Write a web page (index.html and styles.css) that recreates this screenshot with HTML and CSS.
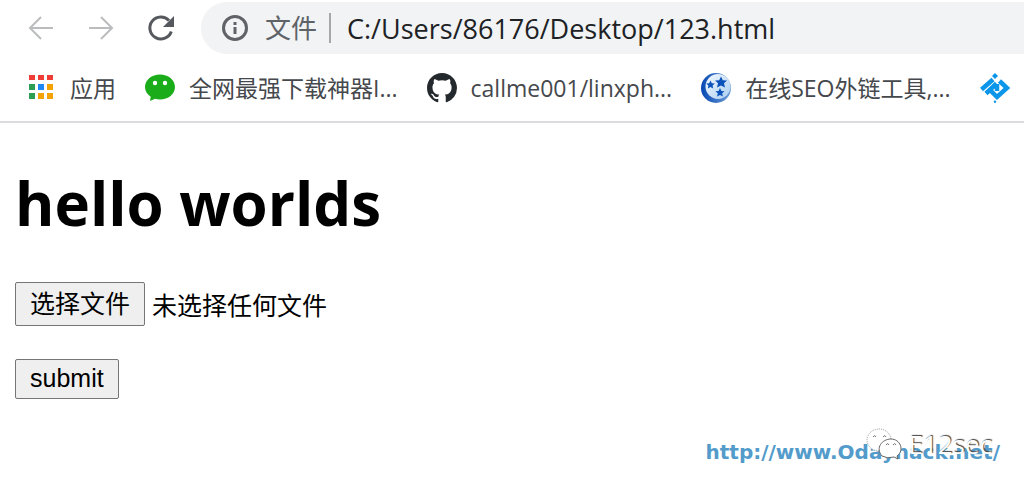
FILE: index.html
```html
<!DOCTYPE html>
<html lang="zh-CN">
<head>
<meta charset="utf-8">
<title>123.html</title>
<link rel="stylesheet" href="styles.css">
</head>
<body>
<header class="browser">
  <div class="toolbar">
    <nav class="controls">
      <button class="tool faded" type="button" aria-label="后退"><svg viewBox="0 0 28 28"><path d="M26 14H3M14 3L3 14l11 11"/></svg></button>
      <button class="tool faded" type="button" aria-label="前进"><svg viewBox="0 0 28 28"><path d="M2 14h23M14 3l11 11-11 11"/></svg></button>
      <button class="tool" type="button" aria-label="重新加载"><svg viewBox="0 0 28 28"><path d="M24.300 17.500A11 11 0 1 1 22 6.500"/><path class="solid" d="M27 2v11H16z"/></svg></button>
    </nav>
    <div class="address">
      <svg class="info" viewBox="0 0 28 28" aria-hidden="true"><circle cx="14" cy="14" r="11.500"/><path d="M14 13v7M14 8v3"/></svg>
      <label class="scheme" for="url">文件</label>
      <input class="url" id="url" type="text" value="C:/Users/86176/Desktop/123.html">
    </div>
  </div>
  <nav class="bookmarks">
    <a class="bookmark" href="#"><svg viewBox="0 0 30 30" aria-hidden="true"><path fill="#f03c37" d="M3 2h6v5H3zM12 2h6v5h-6zM21 2h6v5h-6z"/><path fill="#2e9e55" d="M3 11h6v6H3zM3 20h6v6H3z"/><path fill="#1e88f5" d="M12 11h6v6h-6z"/><path fill="#f2a305" d="M21 11h6v6h-6zM12 20h6v6h-6zM21 20h6v6h-6z"/></svg><span>应用</span></a>
    <a class="bookmark" href="#"><svg viewBox="0 0 30 30" aria-hidden="true"><path fill="#1aad19" d="M15 1.500C6.800 1.500 0 6.900 0 14c0 4 2.200 7.500 5.700 9.800L5 28l5-2.200c1.600.5 3.300.7 5 .7 8.200 0 15-5.400 15-12.500S23.200 1.500 15 1.500z"/><circle cx="10" cy="10" r="2.200" fill="#fff"/><circle cx="20" cy="10" r="2.200" fill="#fff"/></svg><span>全网最强下载神器I...</span></a>
    <a class="bookmark" href="#"><svg viewBox="0 0 16 16" aria-hidden="true"><path fill="#24292e" fill-rule="evenodd" d="M8 0C3.580 0 0 3.580 0 8c0 3.540 2.290 6.530 5.470 7.590.4.070.55-.17.55-.38 0-.19-.01-.82-.01-1.490-2.010.37-2.530-.49-2.690-.94-.09-.23-.48-.94-.82-1.130-.28-.15-.68-.52-.01-.53.63-.01 1.080.58 1.230.82.72 1.210 1.870.87 2.330.66.070-.52.28-.87.51-1.070-1.780-.2-3.640-.89-3.640-3.950 0-.87.31-1.590.82-2.150-.08-.2-.36-1.020.08-2.120 0 0 .67-.21 2.200.82.64-.18 1.320-.27 2-.27s1.360.09 2 .27c1.530-1.040 2.200-.82 2.200-.82.44 1.100.16 1.920.08 2.120.51.56.82 1.270.82 2.150 0 3.070-1.870 3.750-3.650 3.950.29.25.54.73.54 1.480 0 1.070-.01 1.930-.01 2.200 0 .21.15.46.55.38A8.010 8.010 0 0 0 16 8c0-4.420-3.580-8-8-8z"/></svg><span>callme001/linxph...</span></a>
    <a class="bookmark" href="#"><svg viewBox="0 0 30 30" aria-hidden="true"><defs><linearGradient id="ball" x1="0" y1="0" x2="1" y2="1"><stop offset="0" stop-color="#f5faff"/><stop offset="1" stop-color="#a9cdf0"/></linearGradient><linearGradient id="rim"><stop offset="0" stop-color="#0647b3"/><stop offset="1" stop-color="#6f9ed8"/></linearGradient></defs><circle cx="15" cy="15" r="15" fill="url(#rim)"/><circle cx="17" cy="13.500" r="12.500" fill="url(#ball)"/><g fill="#0b52ba"><path d="M20 3.500l1.800 3.700 4.200.2-3 2.900 1 4.200-4-2-4 2 1-4.200-3-2.900 4.200-.2z"/><path d="M9.500 7.500l1.300 2.700 3 .3-2.200 2 .6 3-2.700-1.400-2.700 1.400.6-3-2.200-2 3-.3z"/><path d="M19 15l1.400 2.900 3.200.3-2.400 2.100.7 3.200-2.900-1.600-2.900 1.600.7-3.200-2.400-2.100 3.200-.3z"/></g></svg><span>在线SEO外链工具,...</span></a>
    <a class="bookmark" href="#" aria-label="书签"><svg viewBox="0 0 30 30" aria-hidden="true"><path fill="#0c96ea" d="M15 0l3 3-3 3-3-3z"/><path fill="none" stroke="#0c96ea" stroke-width="4.500" d="M1.500 16.500L13 6.500M6 20.500L16.500 10.500M19.500 8l7.500 7-10 9-6-6M17 11v7"/><circle cx="15" cy="28.700" r="1.200" fill="#0c96ea"/></svg></a>
  </nav>
</header>
<main class="page">
  <h1 class="title">hello worlds</h1>
  <form class="form">
    <label class="picker"><input class="picker-input" type="file"><span class="button browse">选择文件</span><span>未选择任何文件</span></label>
    <button class="button" type="submit">submit</button>
  </form>
</main>
<footer class="footer">
  <a class="site" href="#">http://www.Odayhack.net/</a>
  <div class="signature"><svg viewBox="0 0 36 32" aria-hidden="true"><ellipse class="bubble" cx="13" cy="12" rx="12" ry="11"/><path class="bubble front" d="M16 28C9 20 16 11 25 11s14 11 6 17l1 3-4-2q-7 2-12-1z"/><path class="eyes" d="M7 9q2-3 3 0M17 9q2-3 3 0M20 17q2-3 3 0M27 17q2-3 3 0"/></svg><span>E12sec</span></div>
</footer>
</body>
</html>
```
FILE: styles.css
```css
* { box-sizing: border-box; }
body {
  margin: 0;
  background: #fff;
  color: #000;
  font-family: "Open Sans", "Noto Sans CJK SC", sans-serif;
}
button, input { font: inherit; }
.browser { border-bottom: 2px solid #dadce0; }
.toolbar {
  display: flex;
  gap: 26px;
  padding: 2px 0 0 27px;
}
.controls { display: flex; align-items: center; gap: 32px; }
.tool {
  display: block;
  width: 28px;
  height: 28px;
  padding: 0;
  border: 0;
  background: none;
  color: #55595e;
}
.faded { color: #babcbe; }
.tool svg, .info {
  display: block;
  width: 28px;
  height: 28px;
  fill: none;
  stroke: currentColor;
  stroke-width: 3;
}
.tool.faded svg { stroke-width: 2; }
.tool .solid { fill: currentColor; stroke: none; }
.address {
  display: flex;
  flex: 1;
  align-items: center;
  height: 52px;
  padding-left: 20px;
  border-radius: 26px 0 0 26px;
  background: #f1f3f4;
  color: #5f6368;
}
.scheme {
  margin: 0 16px;
  padding-right: 12px;
  border-right: 2px solid #a5a8ab;
  font-size: 26px;
  line-height: 30px;
}
.url {
  flex: 1;
  min-width: 0;
  padding: 0;
  border: 0;
  background: none;
  color: #202124;
  font-size: 27px;
}
.bookmarks {
  display: flex;
  gap: 29px;
  height: 67px;
  padding-left: 26px;
  align-items: center;
  overflow: hidden;
}
.bookmark {
  display: flex;
  flex: none;
  align-items: center;
  gap: 14px;
  color: #45484c;
  font-size: 23px;
  line-height: 30px;
  text-decoration: none;
  white-space: nowrap;
}
.bookmark svg { width: 30px; height: 30px; }
.page { padding: 35px 15px 0; }
.title {
  margin: 0 0 34px;
  font-size: 60px;
  line-height: 90px;
}
.form {
  display: flex;
  flex-direction: column;
  align-items: flex-start;
  gap: 33px;
  font-size: 25px;
}
.picker {
  position: relative;
  display: flex;
  align-items: center;
  gap: 7px;
}
.picker-input {
  position: absolute;
  inset: 0;
  width: 100%;
  opacity: 0;
}
.button {
  padding: 2px 14px 4px;
  border: 1px solid #767676;
  border-radius: 2px;
  background: #efefef;
  color: #000;
  font-family: "Liberation Sans", "Noto Sans CJK SC", sans-serif;
  font-size: 25px;
  line-height: 32px;
}
.browse { padding: 5px 14px; }
.footer {
  position: relative;
  display: flex;
  justify-content: flex-end;
  padding: 38px 24px 0;
}
.site {
  color: #539bcb;
  font-family: "DejaVu Sans", sans-serif;
  font-size: 20px;
  font-weight: 700;
  line-height: 30px;
  text-decoration: none;
}
.signature {
  position: absolute;
  top: 28px;
  right: 32px;
  display: flex;
  align-items: center;
  gap: 6px;
  color: #fff;
  font-size: 26px;
  line-height: 34px;
  text-shadow: 1px -1px 1px #444;
}
.signature svg { width: 36px; height: 32px; }
.bubble { fill: #fff; stroke: #999; stroke-dasharray: 1 1; }
.front { stroke: #666; stroke-dasharray: none; }
.eyes { fill: none; stroke: #777; }
```
